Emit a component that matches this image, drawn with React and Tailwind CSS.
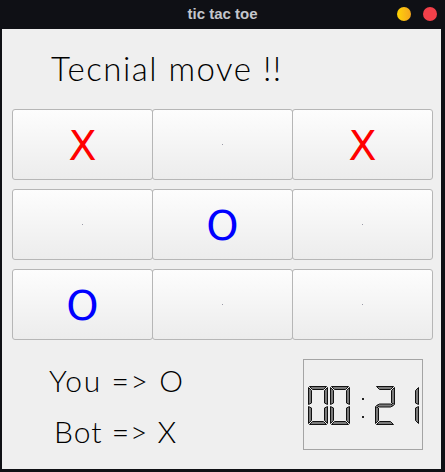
import React from "react";

const board = ["X", "", "X", "", "O", "", "O", "", ""];

const SEGMENTS = {
  0: ["a", "b", "c", "d", "e", "f"],
  1: ["b", "c"],
  2: ["a", "b", "g", "e", "d"],
};

const segPoints = (s, x, y, w, h, t) => {
  const m = y + h / 2;
  switch (s) {
    case "a":
      return [[x + 1, y], [x + w - 1, y], [x + w - 1 - t, y + t], [x + 1 + t, y + t]];
    case "b":
      return [[x + w, y + 1], [x + w, m - 1], [x + w - t, m - 1 - t / 2], [x + w - t, y + 1 + t]];
    case "c":
      return [[x + w, m + 1], [x + w, y + h - 1], [x + w - t, y + h - 1 - t], [x + w - t, m + 1 + t / 2]];
    case "d":
      return [[x + 1 + t, y + h - t], [x + w - 1 - t, y + h - t], [x + w - 1, y + h], [x + 1, y + h]];
    case "e":
      return [[x, m + 1], [x + t, m + 1 + t / 2], [x + t, y + h - 1 - t], [x, y + h - 1]];
    case "f":
      return [[x, y + 1], [x + t, y + 1 + t], [x + t, m - 1 - t / 2], [x, m - 1]];
    case "g":
      return [[x + 1, m], [x + 1 + t, m - t / 2], [x + w - 1 - t, m - t / 2], [x + w - 1, m], [x + w - 1 - t, m + t / 2], [x + 1 + t, m + t / 2]];
    default:
      return [];
  }
};

const Digit = ({ value, x }) => (
  <g>
    {SEGMENTS[value].map((s) => (
      <polygon
        key={s}
        points={segPoints(s, x, 0.5, 19, 38, 3)
          .map((p) => p.join(","))
          .join(" ")}
        fill="#7a7a7a"
        stroke="#111"
        strokeWidth="1"
      />
    ))}
  </g>
);

const LcdClock = () => (
  <div className="w-[120px] h-[91px] border border-[#a4a4a4] flex items-center justify-center pt-[2px]">
    <svg width="112" height="40" viewBox="0 0 112 40">
      <Digit value={0} x={1.5} />
      <Digit value={0} x={23.5} />
      <rect x="55" y="12" width="2" height="2" fill="#222" />
      <rect x="55" y="30" width="2" height="2" fill="#222" />
      <Digit value={2} x={68.5} />
      <Digit value={1} x={92.5} />
    </svg>
  </div>
);

const Cell = ({ mark, first }) => (
  <button
    className={`${
      first ? "" : "-ml-px"
    } w-[141px] h-[71px] rounded-[3px] border border-[#b6b6b6] bg-gradient-to-b from-[#fdfdfd] to-[#ececec] flex items-center justify-center`}
  >
    {mark ? (
      <span
        className={`${
          mark === "X" ? "text-[#ff0000]" : "text-[#0000ff]"
        } text-[41px] leading-none pt-[4px] font-['DejaVu_Sans',sans-serif]`}
      >
        {mark}
      </span>
    ) : (
      <span className="w-px h-px bg-[#9a9aa6]" />
    )}
  </button>
);

export default function App() {
  return (
    <div className="w-[445px] h-[472px] bg-[#0f1015] flex flex-col">
      <div className="h-[29px] relative flex items-center justify-center">
        <span className="text-[15px] font-bold text-[#c4c6cc] font-['Liberation_Sans',sans-serif]">
          tic tac toe
        </span>
        <div className="absolute right-[8px] top-[7px] flex gap-[12px]">
          <span className="w-[14px] h-[14px] rounded-full bg-gradient-to-r from-[#ffd400] to-[#f4a51c]" />
          <span className="w-[14px] h-[14px] rounded-full bg-[#f2404a]" />
        </div>
      </div>
      <div className="ml-[2px] w-[439px] h-[440px] bg-[#efefef] flex flex-col font-['Lato',sans-serif] text-black">
        <div className="h-[80px] pl-[49px] pt-[19px]">
          <span className="text-[33px] font-light leading-[40px] tracking-[1.5px]">Tecnial move !!</span>
        </div>
        <div className="pl-[10px] flex flex-col gap-[9px]">
          {[0, 1, 2].map((r) => (
            <div key={r} className="flex">
              {[0, 1, 2].map((c) => (
                <Cell key={c} mark={board[r * 3 + c]} first={c === 0} />
              ))}
            </div>
          ))}
        </div>
        <div className="flex mt-[19px]">
          <div className="w-[301px] flex flex-col pl-[47px] pt-[3px]">
            <span className="text-[30px] font-light leading-[36px] tracking-[1.6px]">You =&gt; O</span>
            <span className="text-[30px] font-light leading-[36px] tracking-[1px] mt-[15px] pl-[5px]">Bot =&gt; X</span>
          </div>
          <LcdClock />
        </div>
      </div>
    </div>
  );
}
